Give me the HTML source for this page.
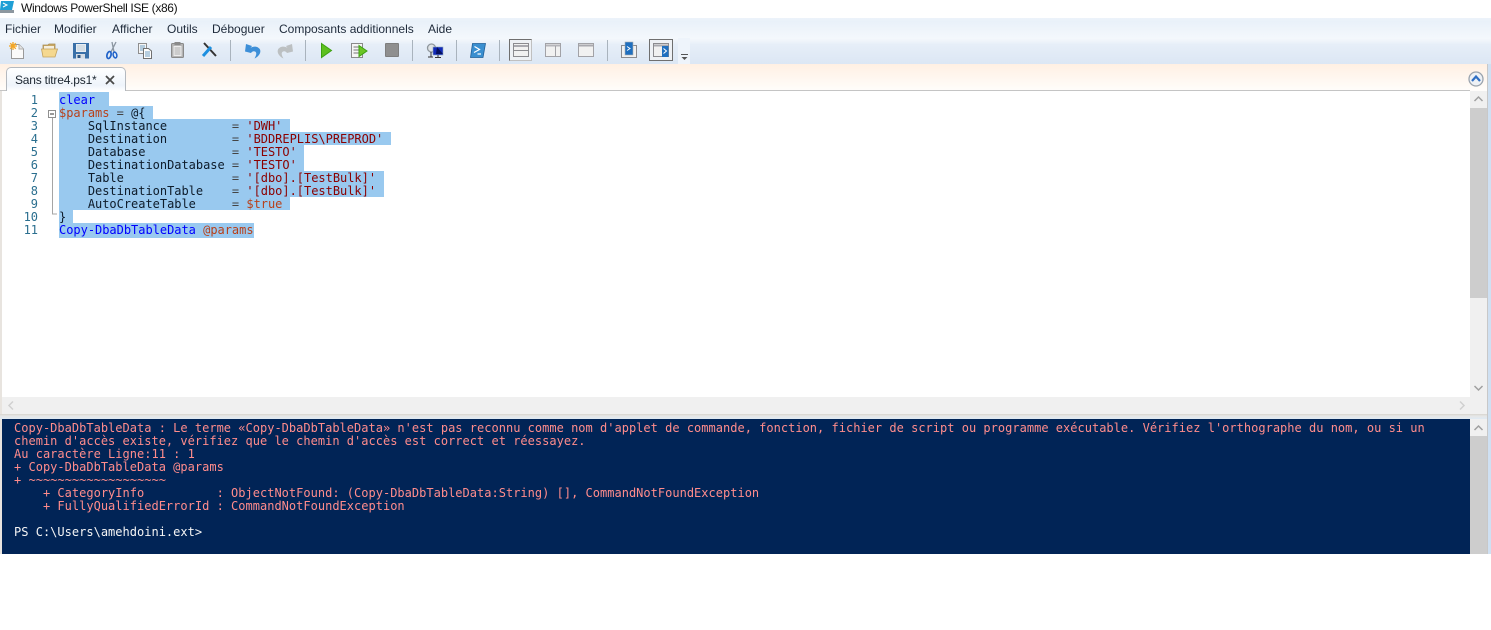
<!DOCTYPE html>
<html><head><meta charset="utf-8">
<style>
html,body{margin:0;padding:0;background:#fff;}
body{width:1491px;height:630px;position:relative;overflow:hidden;font-family:"Liberation Sans",sans-serif;}
.a{position:absolute;}
.m{position:absolute;top:22px;font-size:12px;line-height:14px;color:#1e2a3a;white-space:pre;}
.sel{position:absolute;left:59px;height:13px;background:#99c9ef;}
.code{position:absolute;left:59px;font:12px/13px "DejaVu Sans Mono","Liberation Mono",monospace;white-space:pre;letter-spacing:-.02px;}
.n{position:absolute;width:38px;text-align:right;left:0;font:12px/13px "DejaVu Sans Mono",monospace;color:#2b6f8f;letter-spacing:-.02px;}
.c{position:absolute;left:14px;font:12px/13px "DejaVu Sans Mono","Liberation Mono",monospace;white-space:pre;color:#ff8c8c;letter-spacing:.01px;}
.k{color:#0000ff}.v{color:#b8401a}.s{color:#8b0000}.t{color:#0d1b2a}.o{color:#444}
.sep{position:absolute;top:40px;width:1px;height:21px;background:#a9b3bd;}
svg{position:absolute;overflow:visible;}
</style></head>
<body>
<!-- title -->
<svg style="left:0;top:0" width="14" height="14" viewBox="0 0 14 14"><path d="M1 1H14L12 10H0Z" fill="#1f9fd5"/><path d="M3 3L7 5L3 7" fill="none" stroke="#fff" stroke-width="1"/><path d="M0 10H14V13H0Z" fill="#8d979f"/></svg>
<div class="a" style="left:21px;top:1px;font-size:12px;line-height:15px;color:#111;letter-spacing:-.35px;">Windows PowerShell ISE (x86)</div>

<!-- menu + toolbar -->
<div class="a" style="left:0;top:18px;width:1491px;height:46px;background:linear-gradient(#edf3fa 0,#e9f1f9 8%,#f4f8fc 45%,#e6eef8 58%,#dce7f4 100%);"></div>
<div class="m" style="left:5px">Fichier</div>
<div class="m" style="left:54px">Modifier</div>
<div class="m" style="left:112px">Afficher</div>
<div class="m" style="left:167px">Outils</div>
<div class="m" style="left:212px">Déboguer</div>
<div class="m" style="left:279px">Composants additionnels</div>
<div class="m" style="left:428px">Aide</div>

<!-- new -->
<svg style="left:9px;top:42px" width="16" height="18"><path d="M2.500 2.500H10L14.500 7V16.500H2.500Z" fill="#fafafa" stroke="#9a9a9a"/><path d="M10 2.500V7H14.500" fill="#e4e4e4" stroke="#b0b0b0"/><path d="M4 0V8M0 4H8M1.200 1.200L6.800 6.800M6.800 1.200L1.200 6.800" stroke="#f5a623" stroke-width="1.300"/></svg>
<!-- open -->
<svg style="left:41px;top:43px" width="17" height="15"><path d="M2 2H7L8 1H14V11H2Z" fill="#c9a865" stroke="#a98d52" stroke-width=".8"/><path d="M3 3H13V6H3Z" fill="#f5efdf"/><path d="M.5 6H16.500L14 14H2Z" fill="#f5d88f" stroke="#c3a15c" stroke-width=".8"/></svg>
<!-- save -->
<svg style="left:73px;top:43px" width="16" height="16"><rect width="16" height="15.500" fill="#3a70a8"/><rect x="3" y="1" width="10" height="8" fill="#e7edf3"/><path d="M4 3H12M4 5H12M4 7H12" stroke="#b7c3cf" stroke-width=".8"/><rect x="3" y="11" width="9" height="4.500" fill="#d5dde5"/><rect x="4.500" y="12" width="3" height="3" fill="#2e5784"/></svg>
<!-- cut -->
<svg style="left:106px;top:42px" width="13" height="18"><path d="M10 0L5 10M6 0L8 10" stroke="#8a95a0" stroke-width="1.300" fill="none"/><ellipse cx="3" cy="13" rx="2" ry="3.600" fill="none" stroke="#1f62c9" stroke-width="1.700" transform="rotate(15 3 13)"/><ellipse cx="9" cy="13" rx="1.800" ry="3" fill="none" stroke="#1f62c9" stroke-width="1.500" transform="rotate(-15 9 13)"/></svg>
<!-- copy -->
<svg style="left:138px;top:43px" width="14" height="16"><rect x=".5" y=".5" width="8" height="10" fill="#f5f5f5" stroke="#8e8e8e"/><path d="M2 3H7M2 5H7M2 7H5" stroke="#6f9fc4"/><path d="M5.500 5.500H10.500L13.500 8V15.500H5.500Z" fill="#fdfdfd" stroke="#707070"/><path d="M7 9H12M7 11H12M7 13H12" stroke="#6f9fc4"/></svg>
<!-- paste -->
<svg style="left:171px;top:42px" width="13" height="16"><rect x=".5" y="1.500" width="12" height="14" rx="1" fill="#b4b4b4" stroke="#8a8a8a"/><rect x="3.500" y="0" width="6" height="3" fill="#8a8a8a"/><rect x="2.500" y="4" width="8" height="10" fill="#ececec"/><path d="M3.500 6H9.500M3.500 8H9.500M3.500 10H9.500M3.500 12H9.500" stroke="#adadad"/></svg>
<!-- clear -->
<svg style="left:201px;top:42px" width="16" height="16"><path d="M3 1L15 14" stroke="#333" stroke-width="2"/><path d="M10 5L2 14" stroke="#1c8fe0" stroke-width="3"/></svg>
<div class="sep" style="left:230px"></div>
<!-- undo -->
<svg style="left:245px;top:42px" width="16" height="17"><path d="M1 2L7 4L5.500 6C8 4 13 4 15 7.500C16.500 11 13 15 9.500 16.500C11.500 13 12 10.500 10 9.500C8.500 8.800 7 9.500 6 11L0 9.500Z" fill="#3d8fd8"/></svg>
<!-- redo -->
<svg style="left:277px;top:42px" width="16" height="17"><path d="M15 2L9 4L10.500 6C8 4 3 4 1 7.500C-.5 11 3 15 6.500 16.500C4.500 13 4 10.500 6 9.500C7.500 8.800 9 9.500 10 11L16 9.500Z" fill="#bcc0c2"/></svg>
<div class="sep" style="left:305px"></div>
<!-- run -->
<svg style="left:321px;top:43px" width="11" height="15"><path d="M.5 .5L10.500 7.500L.5 14.500Z" fill="#5dc01f" stroke="#3da112"/></svg>
<!-- run selection -->
<svg style="left:351px;top:43px" width="17" height="15"><rect x=".5" y=".5" width="11" height="14" fill="#f5f5f5" stroke="#8a8a8a"/><path d="M2.500 4H9.500M2.500 7H9.500M2.500 10H9.500" stroke="#777"/><path d="M8 2.500L16 8L8 13.500Z" fill="#6cc525" stroke="#3da112"/></svg>
<!-- stop -->
<div class="a" style="left:385px;top:43px;width:12px;height:12px;background:#8f8f8f;border:1px solid #7e7e7e;border-radius:1px;"></div>
<div class="sep" style="left:412px"></div>
<!-- remote -->
<svg style="left:427px;top:43px" width="16" height="16"><circle cx="4.500" cy="5" r="4" fill="#dfe3e6" stroke="#8f979d" stroke-width="1.300"/><rect x="6" y="4" width="10" height="8" fill="#1129b8" stroke="#8fa6b8" stroke-width=".6"/><path d="M10 4L16 11H9Z" fill="#05105f"/><path d="M4 9V14M1 14H6M8 14.500H14M11 12V14.500" stroke="#333" stroke-width="1"/></svg>
<div class="sep" style="left:456px"></div>
<!-- PS -->
<svg style="left:470px;top:43px" width="16" height="15"><path d="M2.500 .5H15.500L13 14.500H.5Z" fill="#3a8fd0" stroke="#1f5f98" stroke-width=".8"/><path d="M4.500 3.500L9.500 6.500L4 9.500M7.500 11H11" fill="none" stroke="#fff" stroke-width="1.200"/></svg>
<div class="sep" style="left:499px"></div>
<!-- layout 1 (active) -->
<div class="a" style="left:509px;top:39px;width:23px;height:22px;box-sizing:border-box;border:1px solid #6f6f6f;border-right-color:#c0c0c0;border-bottom-color:#c0c0c0;background:#eef1f5;"></div>
<svg style="left:513px;top:43px" width="16" height="14"><rect x=".5" y=".5" width="15" height="13" fill="#f1f1f1" stroke="#8b8b8f"/><path d="M1 3H15" stroke="#a9a9af" stroke-width="2"/><path d="M1 7.500H15" stroke="#8b8b8f"/></svg>
<svg style="left:545px;top:43px" width="16" height="14"><rect x=".5" y=".5" width="15" height="13" fill="#f1f1f1" stroke="#a2a2a7"/><path d="M1 2.500H15" stroke="#b5b5ba" stroke-width="2"/><path d="M10.500 3V13" stroke="#a2a2a7"/></svg>
<svg style="left:578px;top:43px" width="16" height="14"><rect x=".5" y=".5" width="15" height="13" fill="#f1f1f1" stroke="#a2a2a7"/><path d="M1 2.500H15" stroke="#a9a9af" stroke-width="2"/></svg>
<div class="sep" style="left:607px"></div>
<svg style="left:621px;top:42px" width="16" height="16"><rect x=".5" y="3.500" width="15" height="12" fill="#f1f1f1" stroke="#8b8b8f"/><rect x="4" y="0" width="8" height="13" fill="#1f6fbf" stroke="#b0b0b0" stroke-width=".6"/><path d="M6 4.500L9 6.500L6 8.500" fill="none" stroke="#fff"/></svg>
<div class="a" style="left:649px;top:39px;width:24px;height:22px;box-sizing:border-box;border:1px solid #6f6f6f;background:#eef1f5;"></div>
<svg style="left:653px;top:43px" width="16" height="14"><rect x=".5" y=".5" width="15" height="13" fill="#f1f1f1" stroke="#8b8b8f"/><path d="M1 2.500H15" stroke="#a9a9af" stroke-width="2"/><rect x="9" y="3" width="6.500" height="11" fill="#1f6fbf"/><path d="M10.500 5.500L13.500 8L10.500 10.500" fill="none" stroke="#fff"/></svg>
<div class="a" style="left:678px;top:38px;width:12px;height:26px;background:#eef4fb;"></div>
<svg style="left:681px;top:54px" width="7" height="7"><path d="M0 .5H7" stroke="#555"/><path d="M.5 3H6.500L3.500 6Z" fill="#555"/></svg>

<!-- tab strip -->
<div class="a" style="left:0;top:64px;width:1491px;height:27px;background:linear-gradient(#fff0e3,#fffdfb);"></div>
<div class="a" style="left:0;top:90px;width:1470px;height:1px;background:#c4c4c4;"></div>
<div class="a" style="left:6px;top:67px;width:120px;height:24px;box-sizing:border-box;background:linear-gradient(#fff,#eef4fb 75%,#fff);border:1px solid #b4b9bf;border-bottom:none;border-radius:5px 5px 0 0;"></div>
<div class="a" style="left:15px;top:73px;font-size:12px;line-height:15px;color:#1b2530;letter-spacing:-.2px;">Sans titre4.ps1*</div>
<svg style="left:105px;top:75px" width="10" height="10"><path d="M1 1L9 9M9 1L1 9" stroke="#4a4a4a" stroke-width="1.800"/></svg>
<svg style="left:1468px;top:71px" width="16" height="16"><circle cx="8" cy="8" r="7" fill="#eef1f5" stroke="#9aa3ad" stroke-width="1.300"/><path d="M4 10L8 5.500L12 10" fill="none" stroke="#2f6fc4" stroke-width="2.200"/></svg>

<!-- editor -->
<div class="a" style="left:0;top:91px;width:2px;height:463px;background:#e8e4df;"></div>
<div class="sel" style="top:92px;height:14px;width:50px"></div>
<div class="sel" style="top:106px;width:94px"></div>
<div class="sel" style="top:119px;width:231px"></div>
<div class="sel" style="top:132px;width:332px"></div>
<div class="sel" style="top:145px;width:245px"></div>
<div class="sel" style="top:158px;width:245px"></div>
<div class="sel" style="top:171px;width:325px"></div>
<div class="sel" style="top:184px;width:325px"></div>
<div class="sel" style="top:197px;width:231px"></div>
<div class="sel" style="top:210px;width:14px"></div>
<div class="sel" style="top:223px;width:195px;height:15px"></div>

<div class="n" style="top:94px">1</div>
<div class="n" style="top:107px">2</div>
<div class="n" style="top:120px">3</div>
<div class="n" style="top:133px">4</div>
<div class="n" style="top:146px">5</div>
<div class="n" style="top:159px">6</div>
<div class="n" style="top:172px">7</div>
<div class="n" style="top:185px">8</div>
<div class="n" style="top:198px">9</div>
<div class="n" style="top:211px">10</div>
<div class="n" style="top:224px">11</div>

<svg style="left:48px;top:110px" width="10" height="105"><rect x=".5" y=".5" width="7" height="7" fill="#fff" stroke="#909090"/><path d="M2 4H6" stroke="#333"/><path d="M4.500 8V104H9" fill="none" stroke="#a5a5a5"/></svg>

<div class="code" style="top:94px"><span class="k">clear</span></div>
<div class="code" style="top:107px"><span class="v">$params</span> <span class="o">=</span> <span class="t">@{</span></div>
<div class="code" style="top:120px"><span class="t">    SqlInstance         </span><span class="o">=</span> <span class="s">'DWH'</span></div>
<div class="code" style="top:133px"><span class="t">    Destination         </span><span class="o">=</span> <span class="s">'BDDREPLIS\PREPROD'</span></div>
<div class="code" style="top:146px"><span class="t">    Database            </span><span class="o">=</span> <span class="s">'TESTO'</span></div>
<div class="code" style="top:159px"><span class="t">    DestinationDatabase </span><span class="o">=</span> <span class="s">'TESTO'</span></div>
<div class="code" style="top:172px"><span class="t">    Table               </span><span class="o">=</span> <span class="s">'[dbo].[TestBulk]'</span></div>
<div class="code" style="top:185px"><span class="t">    DestinationTable    </span><span class="o">=</span> <span class="s">'[dbo].[TestBulk]'</span></div>
<div class="code" style="top:198px"><span class="t">    AutoCreateTable     </span><span class="o">=</span> <span class="v">$true</span></div>
<div class="code" style="top:211px"><span class="t">}</span></div>
<div class="code" style="top:224px"><span class="k">Copy-DbaDbTableData</span> <span class="v">@params</span></div>

<!-- editor scrollbar -->
<div class="a" style="left:1470px;top:91px;width:17px;height:307px;background:#f0f0f0;"></div>
<div class="a" style="left:1470px;top:108px;width:17px;height:190px;background:#cdcdcd;"></div>
<svg style="left:1474px;top:96px" width="9" height="6"><path d="M.5 5L4.500 1L8.500 5" fill="none" stroke="#a0a0a0" stroke-width="1.500"/></svg>
<svg style="left:1474px;top:385px" width="9" height="6"><path d="M.5 1L4.500 5L8.500 1" fill="none" stroke="#a0a0a0" stroke-width="1.500"/></svg>
<div class="a" style="left:2px;top:397px;width:1485px;height:17px;background:#f0f0f0;"></div>
<svg style="left:8px;top:401px" width="6" height="9"><path d="M5 .5L1 4.500L5 8.500" fill="none" stroke="#d0d0d0" stroke-width="1.500"/></svg>
<svg style="left:1459px;top:401px" width="6" height="9"><path d="M1 .5L5 4.500L1 8.500" fill="none" stroke="#d0d0d0" stroke-width="1.500"/></svg>

<!-- divider & right edge -->
<div class="a" style="left:0;top:414px;width:1491px;height:5px;background:linear-gradient(#d8d4cf,#e6e6e6 40%,#dfe9f3);"></div>
<div class="a" style="left:1487px;top:64px;width:1px;height:490px;background:#c8c8c8;"></div>
<div class="a" style="left:1488px;top:64px;width:3px;height:490px;background:#cfe0f2;"></div>

<!-- console -->
<div class="a" style="left:2px;top:419px;width:1468px;height:135px;background:#012456;"></div>
<div class="a" style="left:1470px;top:419px;width:17px;height:135px;background:#cdcdcd;"></div>
<div class="a" style="left:1470px;top:419px;width:17px;height:17px;background:#f0f0f0;"></div>
<svg style="left:1474px;top:425px" width="9" height="6"><path d="M.5 5L4.500 1L8.500 5" fill="none" stroke="#a0a0a0" stroke-width="1.500"/></svg>

<div class="c" style="top:422px">Copy-DbaDbTableData : Le terme «Copy-DbaDbTableData» n'est pas reconnu comme nom d'applet de commande, fonction, fichier de script ou programme exécutable. Vérifiez l'orthographe du nom, ou si un</div>
<div class="c" style="top:435px">chemin d'accès existe, vérifiez que le chemin d'accès est correct et réessayez.</div>
<div class="c" style="top:448px">Au caractère Ligne:11 : 1</div>
<div class="c" style="top:461px">+ Copy-DbaDbTableData @params</div>
<div class="c" style="top:474px">+ ~~~~~~~~~~~~~~~~~~~</div>
<div class="c" style="top:487px">    + CategoryInfo          : ObjectNotFound: (Copy-DbaDbTableData:String) [], CommandNotFoundException</div>
<div class="c" style="top:500px">    + FullyQualifiedErrorId : CommandNotFoundException</div>
<div class="c" style="top:526px;color:#f5f5f5">PS C:\Users\amehdoini.ext&gt;</div>
</body></html>
